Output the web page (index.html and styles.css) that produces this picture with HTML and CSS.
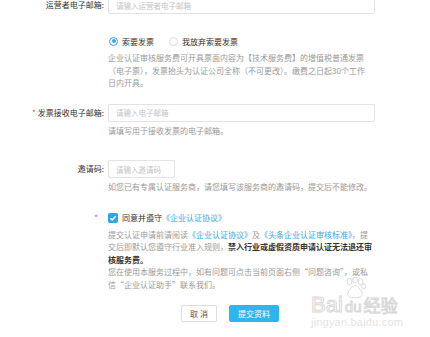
FILE: index.html
```html
<!DOCTYPE html>
<html lang="zh-CN">
<head>
    <meta charset="UTF-8">
    <title>企业认证</title>
    <link rel="stylesheet" href="styles.css">
</head>
<body>
    <div class="page">
        <form class="form">
            <div class="form-item item-email">
                <label class="form-label">运营者电子邮箱:</label>
                <div class="form-control">
                    <input class="input" type="text" placeholder="请输入运营者电子邮箱">
                </div>
            </div>

            <div class="form-item item-invoice">
                <div class="form-label"></div>
                <div class="form-control">
                    <div class="radio-group">
                        <label class="radio checked"><span class="radio-dot"></span>索要发票</label>
                        <label class="radio"><span class="radio-dot"></span>我放弃索要发票</label>
                    </div>
                    <p class="help help-block">企业认证审核服务费可开具票面内容为【技术服务费】的增值税普通发票<br>（电子票），发票抬头为认证公司全称（不可更改）。缴费之日起30个工作<br>日内开具。</p>
                </div>
            </div>

            <div class="form-item item-mail">
                <label class="form-label"><span class="required">*</span>发票接收电子邮箱:</label>
                <div class="form-control">
                    <input class="input" type="text" placeholder="请输入电子邮箱">
                    <p class="help">请填写用于接收发票的电子邮箱。</p>
                </div>
            </div>

            <div class="form-item item-code">
                <label class="form-label">邀请码:</label>
                <div class="form-control">
                    <input class="input input-short" type="text" placeholder="请输入邀请码">
                    <p class="help">如您已有专属认证服务商，请您填写该服务商的邀请码，提交后不能修改。</p>
                </div>
            </div>

            <div class="form-item item-agree">
                <div class="form-label"><span class="required">*</span></div>
                <div class="form-control">
                    <label class="checkbox">
                        <span class="checkbox-box">
                            <svg viewBox="0 0 10 10"><path d="M2.3 5.2l1.9 1.9 3.6-3.8" fill="none" stroke="#fff" stroke-width="1.4"/></svg>
                        </span>
                        同意并遵守<a class="link" href="#">《企业认证协议》</a>
                    </label>
                    <p class="help help-block">提交认证申请前请阅读<a class="link" href="#">《企业认证协议》</a>及<a class="link" href="#">《头条企业认证审核标准》</a>，提交后即默认您遵守行业准入规则，<strong>禁入行业或虚假资质申请认证无法退还审核服务费。</strong><br>您在使用本服务过程中，如有问题可点击当前页面右侧“问题咨询”，或私信“企业认证助手”联系我们。</p>
                </div>
            </div>

            <div class="actions">
                <button class="btn" type="button">取 消</button>
                <button class="btn btn-primary" type="button">提交资料</button>
            </div>
        </form>

        <!-- watermark -->
        <div class="watermark">
            <div class="wm-top">
                <span class="wm-bai">Bai</span>
                <svg class="wm-paw" viewBox="0 0 30 28">
                    <g fill="none" stroke="#d8d8d8" stroke-width="1.2">
                        <ellipse cx="8" cy="6" rx="3" ry="4"/>
                        <ellipse cx="15" cy="4" rx="3" ry="3.6"/>
                        <ellipse cx="22" cy="6" rx="3" ry="4"/>
                        <ellipse cx="26" cy="12" rx="2.5" ry="3.2"/>
                        <path d="M15 11c-4 0-9 7-9 11 0 3 3 4 9 4s9-1 9-4c0-4-5-11-9-11z"/>
                    </g>
                </svg>
                <span class="wm-du">du</span>
                <span class="wm-jy">经验</span>
            </div>
            <div class="wm-url">jingyan.baidu.com</div>
        </div>
    </div>
</body>
</html>
```

FILE: styles.css
```css
* {
    margin: 0;
    padding: 0;
    box-sizing: border-box;
}

body {
    font-family: "Noto Sans CJK SC", "Microsoft YaHei", sans-serif;
    background: #fff;
    color: #333;
    width: 430px;
    height: 337px;
    overflow: hidden;
}

.page {
    position: relative;
    height: 100%;
}

.form {
    margin-top: -4px;
}

.form-item {
    display: grid;
    grid-template-columns: 104px 267px;
    column-gap: 4px;
    align-items: start;
}

.form-label {
    height: 18px;
    line-height: 18px;
    font-size: 8px;
    color: #333;
    text-align: right;
    white-space: nowrap;
}

.required {
    color: #f04848;
    margin-right: 2px;
}

.item-agree .form-label {
    height: 12px;
    line-height: 12px;
    padding-right: 4px;
}

.item-invoice { margin-top: 21px; }
.item-mail { margin-top: 14px; }
.item-code { margin-top: 23px; }
.item-agree { margin-top: 18px; }

.input {
    display: block;
    width: 100%;
    height: 18px;
    border: 1px solid #e3e3e3;
    border-radius: 2px;
    padding: 0 7px;
    font-family: inherit;
    font-size: 7.5px;
    color: #333;
    outline: none;
}

.input::placeholder {
    color: #c4c4c4;
}

.input-short {
    width: 67px;
}

.help {
    font-size: 8px;
    line-height: 12.5px;
    color: #999;
    margin-top: 3px;
}

.help-block {
    margin-top: 5px;
}

.help strong {
    color: #333;
    font-weight: 700;
}

.link {
    color: #3aa6e8;
    text-decoration: none;
}

.radio-group {
    display: flex;
    gap: 15px;
    height: 12px;
    align-items: center;
    padding-left: 1px;
}

.radio {
    display: flex;
    align-items: center;
    gap: 4px;
    font-size: 8px;
    color: #333;
}

.radio-dot {
    width: 9px;
    height: 9px;
    border-radius: 50%;
    border: 1px solid #dcdcdc;
    display: flex;
    align-items: center;
    justify-content: center;
}

.radio.checked .radio-dot {
    border-color: #3aa6e8;
}

.radio.checked .radio-dot::after {
    content: "";
    width: 4px;
    height: 4px;
    border-radius: 50%;
    background: #3aa6e8;
}

.checkbox {
    display: flex;
    align-items: center;
    height: 12px;
    font-size: 8px;
    color: #333;
}

.checkbox-box {
    width: 10px;
    height: 10px;
    border-radius: 2px;
    background: #2ea3e6;
    margin-right: 4px;
    display: flex;
}

.checkbox-box svg {
    width: 10px;
    height: 10px;
}

.actions {
    display: flex;
    gap: 12px;
    margin-top: 14px;
    padding-left: 181px;
}

.btn {
    height: 17px;
    border: 1px solid #dedede;
    border-radius: 2px;
    background: #fff;
    color: #555;
    font-family: inherit;
    font-size: 8px;
    width: 36px;
}

.btn-primary {
    width: 50px;
    background: #30b4f0;
    border-color: #30b4f0;
    color: #fff;
}

/* baidu watermark */
.watermark {
    position: absolute;
    left: 311px;
    top: 280px;
    color: #fff;
    pointer-events: none;
}

.wm-top {
    display: flex;
    align-items: flex-end;
    height: 40px;
}

.wm-bai,
.wm-du {
    font-family: "Liberation Sans", Arial, sans-serif;
    font-size: 22px;
    line-height: 22px;
    -webkit-text-stroke: 1px #d8d8d8;
    color: #fff;
}

.wm-paw {
    width: 24px;
    height: 24px;
    margin: 0 -22px 16px 0;
}

.wm-du {
    font-size: 15px;
    line-height: 18px;
    margin-left: 0;
}

.wm-jy {
    font-size: 17px;
    line-height: 22px;
    -webkit-text-stroke: 1px #d8d8d8;
    color: #fff;
    margin-left: 2px;
}

.wm-url {
    font-family: "Liberation Sans", Arial, sans-serif;
    font-size: 11px;
    color: #e4e4e4;
    letter-spacing: 0.2px;
}
```
